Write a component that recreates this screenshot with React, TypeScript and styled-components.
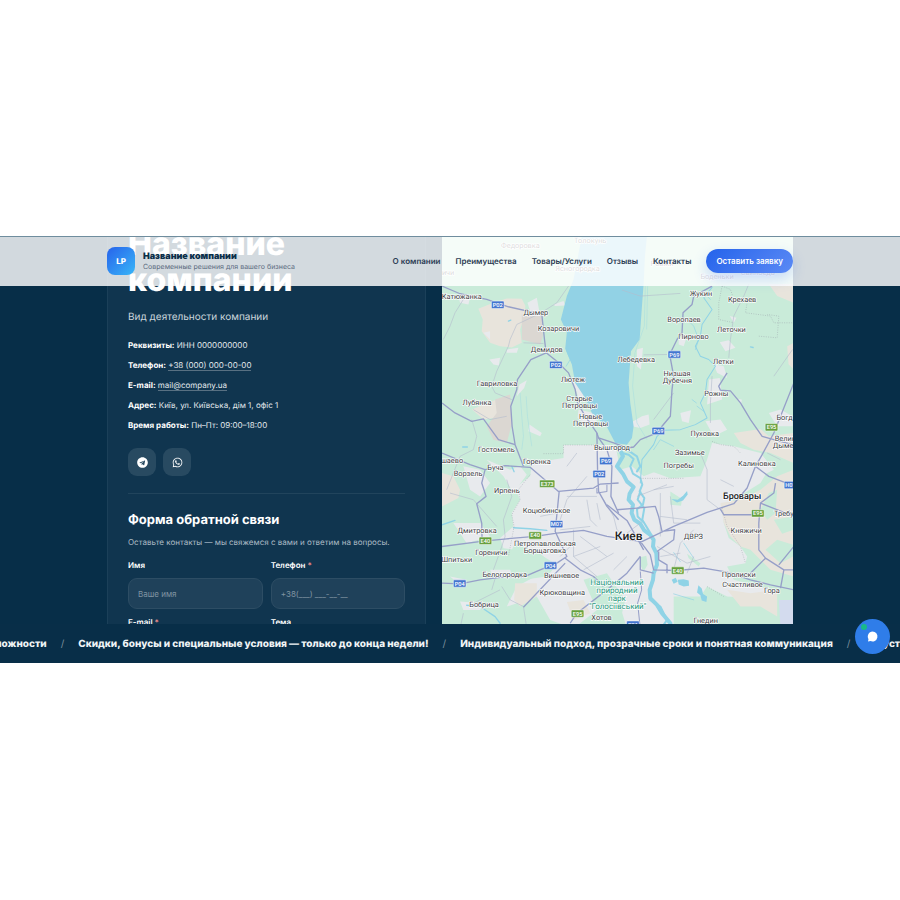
import React from "react";
import styled, { createGlobalStyle } from "styled-components";
import { FaTelegram, FaWhatsapp } from "react-icons/fa";

const Global = createGlobalStyle`
  * { box-sizing: border-box; }
  body { margin: 0; background: #fff; font-family: Inter, "Liberation Sans", sans-serif; text-rendering: geometricPrecision; }
  h1, h2, p { margin: 0; }
  a { color: inherit; text-decoration: none; }
`;

const Page = styled.div`
  padding: 236px 0;
`;

const Frame = styled.div`
  position: relative;
  aspect-ratio: 900 / 427;
  overflow: hidden;
  background: #072e48;
`;

const Header = styled.header`
  position: absolute;
  inset: 0 0 auto;
  z-index: 2;
  border-top: 1px solid #6f8d9e;
  background: rgba(255, 255, 255, 0.82);
`;

const Container = styled.div`
  max-width: 686px;
  margin: 0 auto;
`;

const HeaderRow = styled(Container)`
  display: flex;
  align-items: center;
  justify-content: space-between;
  height: 49px;
  padding-bottom: 1px;
`;

const Brand = styled.a`
  display: flex;
  align-items: center;
  gap: 8px;
`;

const Logo = styled.span`
  display: grid;
  place-items: center;
  width: 28px;
  height: 28px;
  border-radius: 8px;
  background: linear-gradient(135deg, #2763eb, #38b6f8);
  color: #fff;
  font-size: 8px;
  font-weight: 800;
`;

const BrandText = styled.span`
  display: flex;
  flex-direction: column;
`;

const BrandName = styled.strong`
  color: #0b2f49;
  font-size: 9px;
  line-height: 11px;
  font-weight: 900;
`;

const BrandNote = styled.span`
  color: #5b6b80;
  font-size: 7px;
  line-height: 9px;
`;

const Nav = styled.nav`
  display: flex;
  align-items: center;
  gap: 15px;
  color: #2c3c54;
  font-size: 8px;
  font-weight: 600;
  white-space: nowrap;
`;

const Cta = styled.button`
  height: 24px;
  padding: 0 10px;
  border: 0;
  border-radius: 12px;
  background: linear-gradient(135deg, #2563eb, #5b8af5);
  box-shadow: 0 6px 14px rgba(37, 99, 235, 0.22);
  color: #fff;
  font: 600 8px Inter, sans-serif;
`;

const Columns = styled(Container)`
  display: grid;
  grid-template-columns: 319fr 350fr;
  gap: 16px;
`;

const Card = styled.section`
  margin-top: -31px;
  padding: 20px;
  border: 1px solid #1b4059;
  background: #10354f;
  color: #e4eaee;
`;

const Title = styled.h1`
  color: #fff;
  font-size: 32px;
  line-height: 36px;
  font-weight: 800;
`;

const Activity = styled.p`
  margin-top: 11px;
  color: #cbd5dc;
  font-size: 10px;
  line-height: 16px;
`;

const Facts = styled.div`
  display: grid;
  gap: 8px;
  margin-top: 14px;
  font-size: 8px;
  line-height: 12px;
  b { color: #fff; font-weight: 700; }
  a { border-bottom: 1px solid #587082; }
`;

const Socials = styled.div`
  display: flex;
  gap: 7px;
  margin-top: 17px;
`;

const Social = styled.a`
  display: grid;
  place-items: center;
  width: 28px;
  height: 28px;
  border-radius: 9px;
  background: #284a61;
  color: #fff;
  font-size: 11px;
`;

const Divider = styled.hr`
  height: 1px;
  margin: 17px 0 0;
  border: 0;
  background: #21445c;
`;

const FormTitle = styled.h2`
  margin-top: 18px;
  color: #fff;
  font-size: 13px;
  line-height: 16px;
  font-weight: 700;
`;

const FormNote = styled.p`
  margin-top: 8px;
  color: #aebcc6;
  font-size: 8px;
  line-height: 12px;
`;

const Form = styled.form`
  display: grid;
  grid-template-columns: 1fr 1fr;
  gap: 8px;
  margin-top: 12px;
`;

const Field = styled.label`
  display: grid;
  gap: 8px;
  color: #fff;
  font-size: 8px;
  line-height: 10px;
  font-weight: 600;
  i { color: #f08a8a; font-style: normal; }
`;

const Input = styled.input`
  width: 100%;
  height: 31px;
  padding: 0 9px;
  border: 1px solid #2d4d64;
  border-radius: 9px;
  background: #1f415a;
  color: #fff;
  font: 400 8px Inter, sans-serif;
  &::placeholder { color: #8094a2; opacity: 1; }
`;

const MapSvg = styled.svg`
  display: block;
  width: 100%;
  font-family: Roboto, sans-serif;
`;

const Ticker = styled.div`
  position: absolute;
  inset: auto 0 0;
  z-index: 3;
  height: 39px;
  overflow: hidden;
  background: #082e48;
`;

const Track = styled.div`
  display: flex;
  align-items: center;
  gap: 14px;
  height: 39px;
  margin-left: -24px;
  color: #f0f4f6;
  font-size: 10px;
  font-weight: 800;
  white-space: nowrap;
  i { color: #7a8f9d; font-style: normal; font-weight: 400; }
`;

const Chat = styled.button`
  position: absolute;
  right: 10px;
  bottom: 9px;
  z-index: 4;
  width: 35px;
  height: 35px;
  padding: 0;
  border: 0;
  border-radius: 50%;
  background: #2f7de9;
  svg { display: block; }
`;

const navItems = ["О компании", "Преимущества", "Товары/Услуги", "Отзывы", "Контакты"];

const messages = [
  "возможности",
  "Скидки, бонусы и специальные условия — только до конца недели!",
  "Индивидуальный подход, прозрачные сроки и понятная коммуникация",
  "Запустите проект",
];

type Label = [string, number, number];

/* Town names: text, centre x, baseline y */
const towns: Label[] = [
  ["Федоровка", 241, 37], ["Толокунь", 450, 22], ["Ясногородка", 412, 104], ["Ровжи", 665, 91],
  ["Боденьки", 830, 128], ["Свиноедь", 952, 116], ["ничи", 18, 118],
  ["Катюжанка", 65, 189], ["Дымер", 287, 237], ["Козаровичи", 355, 284], ["Демидов", 320, 347],
  ["Лютеж", 398, 436], ["Гавриловка", 171, 450], ["Лубянка", 111, 507], ["Старые", 417, 495],
  ["Петровцы", 418, 516], ["Новые", 451, 548], ["Петровцы", 451, 569], ["Вышгород", 515, 640],
  ["Гостомель", 169, 648], ["Жукин", 782, 181], ["Крехаев", 905, 198], ["Воропаев", 731, 258],
  ["Леточки", 873, 288], ["Пирново", 759, 308], ["Лебедевка", 588, 378], ["Летки", 849, 383],
  ["Низшая", 710, 419], ["Дубечня", 711, 439], ["Рожны", 828, 479], ["Богд", 1032, 552],
  ["Пуховка", 793, 599], ["Велик", 1034, 613], ["Дымер", 1034, 634], ["Зазимье", 748, 656],
  ["Погребы", 715, 695], ["Калиновка", 949, 690], ["Горенка", 290, 684], ["Буча", 166, 700],
  ["Ворзель", 84, 719], ["шаево", 36, 680], ["Ирпень", 200, 769], ["Коцюбинское", 319, 830],
  ["Дмитровка", 111, 889], ["Петропавловская", 314, 930], ["Борщаговка", 314, 950],
  ["Гореничи", 154, 956], ["Шпитьки", 50, 977], ["Белогородка", 194, 1021], ["Вишневое", 364, 1024],
  ["Крюковщина", 366, 1074], ["Бобрица", 132, 1111], ["Хотов", 484, 1150], ["Требу", 1030, 840],
  ["ДВРЗ", 759, 908], ["Княжичи", 917, 890], ["Пролиски", 895, 1021], ["Счастливое", 906, 1051],
  ["Гора", 994, 1069], ["Гнедин", 796, 1158],
];

/* Road shields: text, centre x, centre y */
const blueShields: Label[] = [
  ["P02", 173, 206], ["P02", 347, 386], ["P69", 702, 355], ["P69", 654, 584], ["P69", 497, 674],
  ["P02", 477, 713], ["M07", 349, 863], ["P04", 331, 987], ["P04", 59, 1041], ["H07", 1050, 746],
  ["P01", 578, 1164],
];
const greenShields: Label[] = [
  ["E95", 993, 573], ["E373", 321, 742], ["E40", 285, 897], ["E40", 136, 913], ["E95", 952, 831],
  ["E40", 712, 1002], ["E95", 412, 1131],
];

const Shield = ({ data, fill }: { data: Label; fill: string }) => {
  const width = data[0].length > 3 ? 46 : 38;
  return (
    <g>
      <rect x={data[1] - width / 2} y={data[2] - 11} width={width} height={22} rx={3} fill={fill} stroke="#fff" strokeWidth={1.5} />
      <text x={data[1]} y={data[2] + 6} fill="#fff" fontSize={17} fontWeight={500} textAnchor="middle">{data[0]}</text>
    </g>
  );
};

const RegionMap = () => (
  <MapSvg viewBox="6 0 1050 1176" preserveAspectRatio="xMidYMin slice" role="img" aria-label="Карта">
    <rect x="0" width="1062" height="1176" fill="#c9ebd9" />
    {/* urban area */}
    <path fill="#e8eaed" d="M370 626H520L560 650 620 700 690 726 780 720 800 670 815 620 880 630 960 650 990 690 960 740 880 790 845 815 850 860 865 905 900 930 920 960 915 980 860 990 880 1030 990 1060 960 1085 860 1080 800 1050 780 1080 700 1080 700 1176H560L540 1110 480 1060 470 1120 400 1176 330 1150 290 1080 200 1110 230 1050 340 990 300 950 190 935 180 905 220 870 215 830 240 790 225 755 270 720 275 680 370 665Z" />
    <path fill="#c9ebd9" d="M225 920 310 960 350 985 320 1020 250 1030 190 990ZM430 1030 500 1010 555 1090 540 1150 470 1120ZM600 962 618 958 622 985 610 1005 600 985ZM520 600 590 620 660 700 610 720 575 690 540 700Z" />
    <path fill="#c9ebd9" d="M690 765 725 788 722 808 690 805ZM740 952 780 980 775 990 745 965ZM850 830 900 820 910 865 855 870Z" />
    {/* open ground */}
    <path fill="#e8e4dc" d="M115 218 160 200 200 187 245 188 256 210 250 250 240 280 245 320 215 334 180 330 150 320 125 285 128 250ZM985 144H1060V200L1010 180ZM1040 330 1060 320V400L1044 384ZM880 590 960 578 985 600 1060 590V680L990 650 940 640 900 620ZM6 710 40 720 60 760 55 785 6 810ZM840 800 900 790 960 760 1010 720 1060 700V1020L990 1000 930 940 900 930 870 900 850 860ZM96 520 130 505 170 490 210 485 200 540 130 550ZM225 1040 290 1040 290 1080 240 1110 222 1090ZM380 1096 430 1090 450 1130 400 1150ZM860 1060 930 1070 1010 1060V1140L960 1110 900 1110Z" />
    <path fill="#c9ebd9" d="M985 770 1010 760 1005 830 980 850 960 820ZM975 940 1010 910 1058 925V960L1020 980ZM1000 850 1060 840V880L1025 892Z" />
    <path fill="#dbd7d2" d="M245 235 305 235 308 300 300 325 245 310ZM165 490 210 475 216 560 200 620 160 610 140 570 170 530Z" />
    <path fill="#d3dbee" d="M1015 1090H1060V1176H1020Z" />
    <g fill="#e8eaed">
      <path d="M55 180 90 186 85 205 60 200ZM262 200 290 185 300 240 275 240ZM340 205 370 195 375 208 345 210ZM148 370 180 365 176 388 160 385ZM130 290 150 285 150 310ZM200 340 235 335 230 350 200 350ZM238 445 260 432 252 455 230 480ZM268 565 305 590 300 600 265 585ZM400 440 425 440 430 480 420 500ZM415 520 460 530 475 570 440 570 412 545Z" />
      <path d="M590 340 608 335 602 400 590 390ZM570 560 605 540 625 535 628 565 600 575 575 570ZM720 530 752 522 745 560 725 555ZM715 306 740 300 730 330 715 325ZM838 318 865 312 885 335 855 345ZM820 384 850 390 860 425 830 410ZM806 430 838 425 845 490 800 505ZM795 555 840 550 860 580 820 600ZM985 530 1020 520 1056 540V570H1010ZM868 240 888 245 880 260ZM893 488 904 490 902 508Z" />
      <path d="M70 690 120 700 150 740 120 780 90 760ZM40 860 120 860 150 900 80 920ZM140 670 210 700 240 690 260 715 220 770 190 720ZM30 1020 80 1030 60 1045ZM60 1095 130 1100 120 1120 70 1120ZM150 1000 210 1000 220 1025 160 1025ZM910 660 960 650 1000 700 970 715Z" />
    </g>
    {/* reservoir and the river */}
    <path fill="#92d2e5" d="M425 0H620L614 60 610 144 605 210 598 310 572 345 565 440 570 500 580 570 575 605 560 625 525 620 500 572 455 530 435 485 405 440 395 385 375 338 380 288 362 250 380 180 400 130Z" />
    <g fill="none" stroke="#8fd3e6" strokeLinecap="round" strokeLinejoin="round">
      <path strokeWidth="12" d="M535 630 548 660 530 690 548 712 560 735 580 752 568 772 565 790 578 805 574 830 582 850 600 862 612 882 630 895 640 910 638 930 648 950 650 985 640 1010 638 1030 628 1060 630 1085 650 1105 665 1130 690 1160" />
      <path strokeWidth="6" d="M545 650 565 655 580 668 570 690 578 712 600 725 606 745 598 765 612 785 608 805 590 818 592 840 612 860 M600 765 592 790 612 815 606 850 630 890 M630 1090 660 1110 680 1150 670 1165 M560 640 590 660 600 690 590 705" />
      <path strokeWidth="3" d="M815 154 790 185 815 220 785 265 780 300 765 330 780 360 805 370 825 390 800 430 795 470 780 500 800 545 765 565 720 580 670 582 650 600 640 625 605 670 600 740" />
      <path strokeWidth="2" d="M740 250 760 270 775 310 765 340 M770 510 790 525 M755 490 768 500 M640 640 660 610 700 630 M790 170 810 190 M380 345 390 370 378 390 M700 1072 760 1090 M730 920 760 965 M700 948 720 976" />
      <path strokeWidth="4" d="M220 874 270 877 320 882 M80 1106 120 1110 165 1140 180 1160 M6 865 45 852 M215 690 222 706 M68 632 82 632 M205 255 212 252 M930 332 938 334" />
    </g>
    <path fill="#8fd3e6" d="M693 788 712 790 728 778 740 764 742 774 728 792 710 798ZM712 1030 730 1028 745 1032 746 1048 730 1050 715 1044ZM694 1030 706 1024 712 1036 700 1042ZM774 1046 784 1056 788 1072 800 1080 798 1096 784 1092 780 1076 770 1068Z" />
    <g fill="none" stroke="#a5dce0" strokeWidth="1.5">
      <path d="M615 150 612 270 584 350 577 450 590 560 620 610 M622 150 619 280 M240 470 245 540 250 600 245 640 M258 480 262 540 275 630" />
    </g>
    {/* minor roads */}
    <g fill="none" stroke="#b4bccd" strokeWidth="1.8">
      <path d="M70 190 45 230 30 270 10 310 M385 150 350 200 300 232 230 265 210 310 205 330 170 405 155 450 165 470 215 490 M250 320 310 322 M95 550 110 600 100 640 60 660 20 760 M100 520 150 550 200 540 M610 356 680 355 M640 550 700 470" />
      <path d="M925 144 910 180 880 240 870 310 865 365 M545 162 600 180 720 172 M815 420 810 500 810 560 M1056 340 1000 420 M440 720 380 790 360 850 M440 790 450 850 470 870 M380 780 470 780 M490 790 520 840 530 880 560 905" />
      <path d="M30 770 100 790 170 870 M60 1176 70 1130 M155 1060 170 1010 M185 1050 210 1090 250 1110 260 1176 M100 1100 180 1060 M200 730 215 780 190 850 195 900 180 945 160 1000 M300 840 350 830 M360 880 450 870" />
      <path d="M590 780 680 745 M640 760 700 750 M660 770 660 900 M690 780 700 860 780 860 M660 840 740 850 M560 960 520 1000 M700 1000 720 920 760 880 M780 650 800 700 800 790 840 820 M840 730 880 750 M980 650 1020 670 M650 930 740 980 810 960 M660 960 720 950 M740 1010 760 960" />
      <path d="M380 690 410 650 M400 880 400 960 480 930 M420 900 500 960 M360 960 400 920 M470 800 480 850 M400 960 470 1020 M430 1000 520 950 M560 890 600 860" />
    </g>
    <g fill="none" stroke="#9ba2ab" strokeWidth="1.5" strokeDasharray="3 4">
      <path d="M310 652H370V626H470 M270 715 235 760 240 790 215 835 222 870 205 960 M815 615 840 625 880 630 900 650 M600 726H730 M845 150 870 160 880 190 920 200 915 230 990 240 1000 260 1060 260 M955 300 1010 305 1015 240 980 235 M845 150 835 200 835 250 880 260 M845 815 860 870 900 930 915 980 M800 1050 850 1080" />
    </g>
    {/* major roads */}
    <g fill="none" stroke="#969fc8" strokeWidth="4" strokeLinejoin="round">
      <path d="M6 150 60 173 140 190 205 212 305 235 313 310 318 350 272 370 232 430 230 460 212 510 216 570 225 625 250 690" />
      <path d="M318 350 350 375 385 410 405 460 412 500 435 540 470 590 475 605 520 620 560 635 580 632 600 610 650 590 665 570 690 540 695 460 700 420 688 355 710 310 725 290 728 230 755 205 760 180 815 150" />
      <path d="M6 500 45 530 95 555 130 548 175 610 225 625 M470 590 472 700 475 765 500 810 535 850 M475 605 500 640 515 690 512 780 535 830 M6 650 90 685 135 700 195 688 270 693 355 765 460 755 480 743 535 740 M135 700 125 740 138 780 110 802 125 860 126 910" />
      <path d="M6 930 130 914 200 907 285 900 350 890 430 882 500 900 600 915 M6 1040 60 1042 120 1030 200 1020 250 1022 300 1000 350 980 380 960 345 885 357 765 M375 965 420 1000 460 1020 490 1050 M375 980 250 1112 M390 1160 410 1130 500 1060 560 1010 600 960" />
      <path strokeWidth="3" d="M470 755 470 770 500 765 500 745" />
      <path d="M600 918 700 870 800 828 880 802 920 755 945 690 965 655 1000 590 1060 440 M600 915 630 955 640 1000 710 1002 790 995 860 1007 930 1030 990 1045 1060 1060 M500 805 560 852 610 940 M650 945 700 910 703 880 665 885 655 840 645 810 590 815 530 820 M655 945 655 970 680 985 680 1010 M600 960 600 1000 640 1010" />
      <path d="M840 462 870 464 900 500 930 550 965 600 1000 610 1056 625 M860 410 835 450 840 462 M840 818 850 835 960 835 M945 690 985 720 1050 745 M1005 740 1000 770 960 800 955 860 955 940 975 965 1030 1000 1060 1000 M975 965 930 1010 M1030 1000 1020 1055 M1015 985 1060 930 M960 800 1060 840" />
      <path strokeWidth="3" d="M600 1005 604 1060 592 1100 600 1176" />
    </g>
    {towns.map(([name, x, y], i) => (
      <text key={i} x={x} y={y} fontSize={22} fill="#3c4043" stroke="#fff" strokeWidth={4} strokeLinejoin="round" paintOrder="stroke" textAnchor="middle">{name}</text>
    ))}
    <g stroke="#fff" strokeWidth={4} paintOrder="stroke" textAnchor="middle">
      <text x={565} y={912} fontSize={36} fontWeight={500} fill="#202124">Киев</text>
      <text x={905} y={787} fontSize={27} fontWeight={500} fill="#202124">Бровары</text>
      <g fill="#26977c" fontSize={24}>
        <text x={530} y={1044}>Національний</text>
        <text x={530} y={1069}>природний</text>
        <text x={530} y={1093}>парк</text>
        <text x={532} y={1118}>"Голосіївський"</text>
      </g>
    </g>
    {blueShields.map((s, i) => <Shield key={i} data={s} fill="#4375cf" />)}
    {greenShields.map((s, i) => <Shield key={i} data={s} fill="#659f3c" />)}
  </MapSvg>
);

export default function App() {
  return (
    <>
      <Global />
      <Page>
        <Frame>
          <Header>
            <HeaderRow>
              <Brand href="#">
                <Logo>LP</Logo>
                <BrandText>
                  <BrandName>Название компании</BrandName>
                  <BrandNote>Современные решения для вашего бизнеса</BrandNote>
                </BrandText>
              </Brand>
              <Nav>
                {navItems.map((item) => <a key={item} href="#">{item}</a>)}
                <Cta type="button">Оставить заявку</Cta>
              </Nav>
            </HeaderRow>
          </Header>
          <Columns>
            <Card>
              <Title>Название компании</Title>
              <Activity>Вид деятельности компании</Activity>
              <Facts>
                <p><b>Реквизиты:</b> ИНН 0000000000</p>
                <p><b>Телефон:</b> <a href="tel:+380000000000">+38 (000) 000-00-00</a></p>
                <p><b>E-mail:</b> <a href="mailto:mail@company.ua">mail@company.ua</a></p>
                <p><b>Адрес:</b> Київ, ул. Київська, дім 1, офіс 1</p>
                <p><b>Время работы:</b> Пн–Пт: 09:00–18:00</p>
              </Facts>
              <Socials>
                <Social href="#" aria-label="Telegram"><FaTelegram /></Social>
                <Social href="#" aria-label="WhatsApp"><FaWhatsapp /></Social>
              </Socials>
              <Divider />
              <FormTitle>Форма обратной связи</FormTitle>
              <FormNote>Оставьте контакты — мы свяжемся с вами и ответим на вопросы.</FormNote>
              <Form>
                <Field><span>Имя</span><Input placeholder="Ваше имя" /></Field>
                <Field><span>Телефон <i>*</i></span><Input type="tel" placeholder="+38(___) ___-__-__" /></Field>
                <Field><span>E-mail <i>*</i></span><Input type="email" /></Field>
                <Field><span>Тема</span><Input /></Field>
              </Form>
            </Card>
            <RegionMap />
          </Columns>
          <Ticker>
            <Track>
              {messages.map((m, i) => (
                <React.Fragment key={m}>
                  {i > 0 && <i>/</i>}
                  <span>{m}</span>
                </React.Fragment>
              ))}
            </Track>
          </Ticker>
          <Chat type="button" aria-label="Чат">
            <svg width="35" height="35" viewBox="0 0 35 35">
              <circle cx="9" cy="8" r="3" fill="#18b98a" />
              <path d="M17.500 12.500a5 5 0 1 1-2 9.600l-2.500.400.500-2.400a5 5 0 0 1 4-7.600z" fill="#fff" />
            </svg>
          </Chat>
        </Frame>
      </Page>
    </>
  );
}
